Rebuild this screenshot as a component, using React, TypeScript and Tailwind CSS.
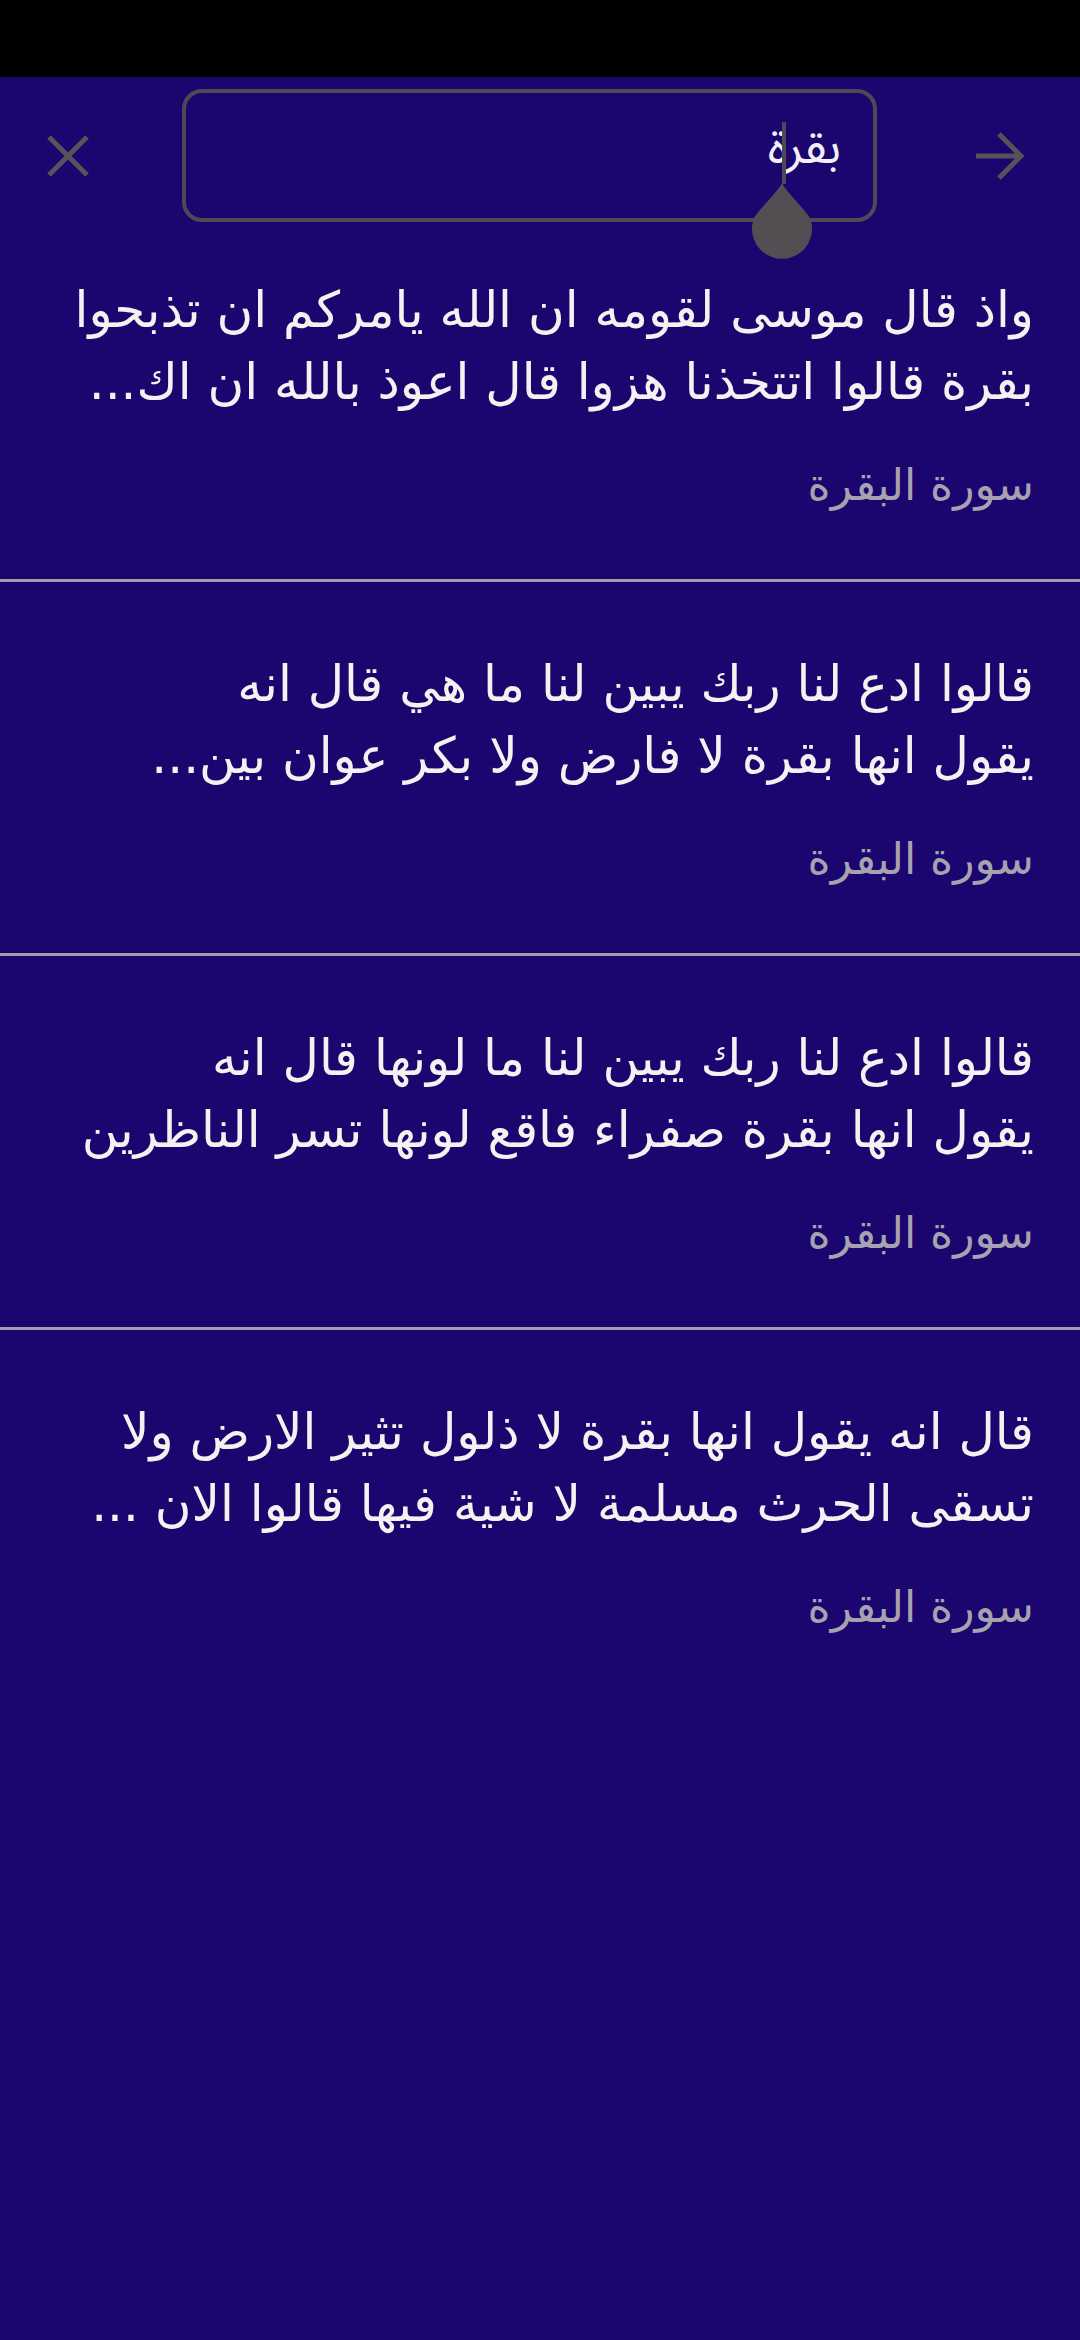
import React from "react";

const items: string[][] = [
  ["واذ قال موسى لقومه ان الله يامركم ان تذبحوا", "بقرة قالوا اتتخذنا هزوا قال اعوذ بالله ان اك..."],
  ["قالوا ادع لنا ربك يبين لنا ما هي قال انه", "يقول انها بقرة لا فارض ولا بكر عوان بين..."],
  ["قالوا ادع لنا ربك يبين لنا ما لونها قال انه", "يقول انها بقرة صفراء فاقع لونها تسر الناظرين"],
  ["قال انه يقول انها بقرة لا ذلول تثير الارض ولا", "تسقى الحرث مسلمة لا شية فيها قالوا الان ..."],
];

const naskh = { fontFamily: '"DejaVu Sans", sans-serif' };

export default function App() {
  return (
    <div className="w-[1080px] h-[2340px] bg-[#1b066f] flex flex-col overflow-hidden">
      <div className="h-[77px] bg-black shrink-0" />
      <div className="relative h-[145px] shrink-0 flex items-start pt-[12px]">
        <div className="w-[182px] h-[133px] flex items-center">
          <svg width="44" height="44" viewBox="0 0 44 44" className="ml-[46px]">
            <path d="M3 3 L41 41 M41 3 L3 41" stroke="#57525a" strokeWidth="5" fill="none" />
          </svg>
        </div>
        <div className="relative w-[695px] h-[133px] rounded-[20px] border-[4px] border-[#4e4a54] flex items-center justify-end pr-[32px]">
          <span dir="rtl" className="text-[48px] text-[#f2eff7] leading-none -mt-[16px]" style={{ fontFamily: '"Noto Sans Arabic", "DejaVu Sans", sans-serif' }}>
            بقرة
          </span>
          <div className="absolute left-[596px] top-[29px] w-[4px] h-[62px] bg-[#4e4a54]" />
          <svg className="absolute left-[563px] top-[90px]" width="66" height="76" viewBox="0 0 66 76">
            <path d="M33 0 C38 10 55 25 61 35 A30 30 0 1 1 5 35 C11 25 28 10 33 0 Z" fill="#524e52" />
          </svg>
        </div>
        <div className="flex-1 h-[133px] flex items-center">
          <svg width="52" height="50" viewBox="0 0 52 50" className="ml-[97px]">
            <path d="M2 25 L47 25 M25 3 L47 25 L25 47" stroke="#57525a" strokeWidth="5" fill="none" />
          </svg>
        </div>
      </div>
      <div className="flex flex-col">
        {items.map((lines, i) => (
          <div
            key={i}
            dir="rtl"
            className={`flex flex-col pr-[46px] ${i === 0 ? "pt-[52px]" : "pt-[66px]"} ${i < items.length - 1 ? "border-b-[3px] border-[#a19cae] pb-[64px]" : ""}`}
            style={naskh}
          >
            {lines.map((l, j) => (
              <div key={j} className="whitespace-nowrap text-[50px] leading-[72px] text-[#f6f1f1]">
                {l}
              </div>
            ))}
            <div className="mt-[37px] whitespace-nowrap text-[44px] leading-[60px] text-[#a6a2b0]">سورة البقرة</div>
          </div>
        ))}
      </div>
    </div>
  );
}
